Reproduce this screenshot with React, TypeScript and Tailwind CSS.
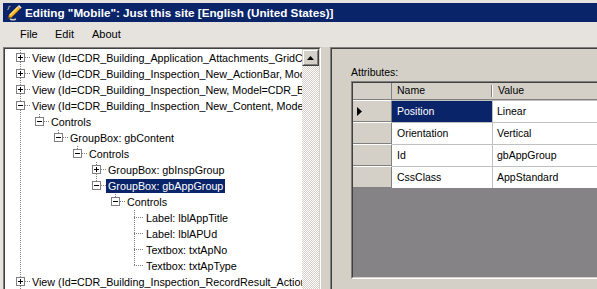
import React from 'react';

type Kind = 'plus' | 'minus' | 'leaf';

type TreeRow = {
  label: string;
  level: number;
  kind: Kind;
  up: boolean;
  down: boolean;
  anc: boolean[];
  selected?: boolean;
};

const under = [true, false, false, false, false, false];

const rows: TreeRow[] = [
  { label: 'View (Id=CDR_Building_Application_Attachments_GridCell, Model=CDR_Building_Application)', level: 0, kind: 'plus', up: true, down: true, anc: [] },
  { label: 'View (Id=CDR_Building_Inspection_New_ActionBar, Model=CDR_Building_Inspection)', level: 0, kind: 'plus', up: true, down: true, anc: [] },
  { label: 'View (Id=CDR_Building_Inspection_New, Model=CDR_Building_Inspection)', level: 0, kind: 'plus', up: true, down: true, anc: [] },
  { label: 'View (Id=CDR_Building_Inspection_New_Content, Model=CDR_Building_Inspection)', level: 0, kind: 'minus', up: true, down: true, anc: [] },
  { label: 'Controls', level: 1, kind: 'minus', up: true, down: false, anc: under.slice(0, 1) },
  { label: 'GroupBox: gbContent', level: 2, kind: 'minus', up: true, down: false, anc: under.slice(0, 2) },
  { label: 'Controls', level: 3, kind: 'minus', up: true, down: false, anc: under.slice(0, 3) },
  { label: 'GroupBox: gbInspGroup', level: 4, kind: 'plus', up: true, down: true, anc: under.slice(0, 4) },
  { label: 'GroupBox: gbAppGroup', level: 4, kind: 'minus', up: true, down: false, anc: under.slice(0, 4), selected: true },
  { label: 'Controls', level: 5, kind: 'minus', up: true, down: false, anc: under.slice(0, 5) },
  { label: 'Label: lblAppTitle', level: 6, kind: 'leaf', up: true, down: true, anc: under.slice(0, 6) },
  { label: 'Label: lblAPUd', level: 6, kind: 'leaf', up: true, down: true, anc: under.slice(0, 6) },
  { label: 'Textbox: txtApNo', level: 6, kind: 'leaf', up: true, down: true, anc: under.slice(0, 6) },
  { label: 'Textbox: txtApType', level: 6, kind: 'leaf', up: true, down: false, anc: under.slice(0, 6) },
  { label: 'View (Id=CDR_Building_Inspection_RecordResult_ActionBar, Model=CDR_Building_Inspection)', level: 0, kind: 'plus', up: true, down: true, anc: [] },
];

const attrs = [
  { name: 'Position', value: 'Linear' },
  { name: 'Orientation', value: 'Vertical' },
  { name: 'Id', value: 'gbAppGroup' },
  { name: 'CssClass', value: 'AppStandard' },
];

// one 19x16 indent cell of the tree: dotted connectors and the +/- box
function Cell({ kind, up, down, line }: { kind?: Kind; up?: boolean; down?: boolean; line?: boolean }) {
  const dot = { stroke: '#808080', strokeDasharray: '1 1', strokeWidth: 1 };
  return (
    <svg width="19" height="16" className="shrink-0" shapeRendering="crispEdges">
      {line && <line x1="9.5" y1="0" x2="9.5" y2="16" {...dot} />}
      {kind === 'leaf' && (
        <>
          {up && <line x1="9.5" y1="0" x2="9.5" y2="8" {...dot} />}
          {down && <line x1="9.5" y1="8" x2="9.5" y2="16" {...dot} />}
          <line x1="9" y1="7.5" x2="19" y2="7.5" {...dot} />
        </>
      )}
      {(kind === 'plus' || kind === 'minus') && (
        <>
          {up && <line x1="9.5" y1="0" x2="9.5" y2="3" {...dot} />}
          {down && <line x1="9.5" y1="12" x2="9.5" y2="16" {...dot} />}
          <line x1="14" y1="7.5" x2="19" y2="7.5" {...dot} />
          <rect x="5.5" y="3.5" width="8" height="8" fill="#fff" stroke="#808080" />
          <line x1="7" y1="7.5" x2="12" y2="7.5" stroke="#000" />
          {kind === 'plus' && <line x1="9.5" y1="5" x2="9.5" y2="10" stroke="#000" />}
        </>
      )}
    </svg>
  );
}

function PencilIcon() {
  return (
    <svg width="17" height="17" viewBox="0 0 17 17" className="shrink-0">
      <path d="M3 3.5 L5.5 2 M2.5 6 L4 4" stroke="#9a9a9a" strokeWidth="1.2" fill="none" />
      <path d="M5 15 Q8 16.5 11 15" stroke="#c8c8c8" strokeWidth="1.5" fill="none" />
      <path d="M3 14.5 L4.2 10.8 L12.8 2.2 L15.3 4.7 L6.7 13.3 Z" fill="#f5b21c" stroke="#a0560c" strokeWidth="0.8" />
      <path d="M4.2 10.8 L12.8 2.2 L13.8 3.2 L5.2 11.8 Z" fill="#ffe37a" />
      <path d="M12.8 2.2 L14 1 L16.5 3.5 L15.3 4.7 Z" fill="#f0f0f0" stroke="#8a8a8a" strokeWidth="0.6" />
      <path d="M3 14.5 L3.6 12.6 L4.9 13.9 Z" fill="#303030" />
    </svg>
  );
}

export default function App() {
  return (
    <div className="flex h-[289px] w-[597px] flex-col overflow-hidden bg-[#e6e3df] pl-[3px] pt-[3px] font-['Liberation_Sans',Arial,sans-serif] text-black">
      {/* title bar */}
      <div className="flex h-[19px] shrink-0 items-center gap-[3px] bg-[#0a246a] pl-[2px] text-[11.7px] font-bold whitespace-nowrap text-white">
        <PencilIcon />
        <span>Editing "Mobile": Just this site [English (United States)]</span>
      </div>

      {/* menu */}
      <div className="flex h-[25px] shrink-0 items-center pl-[17px] text-[11px]">
        <span className="w-[35px]">File</span>
        <span className="w-[37px]">Edit</span>
        <span>About</span>
      </div>

      <div className="flex min-h-0 flex-1 -ml-[3px] pl-[3px]">
        {/* tree */}
        <div className="flex w-[318px] shrink-0 border-t border-l border-t-[#808080] border-l-[#808080] border-r border-r-white">
          <div className="flex min-w-0 flex-1 border-t border-l border-t-[#404040] border-l-[#404040] border-r border-r-[#d4d0c8]">
            <div className="min-w-0 flex-1 overflow-hidden bg-white pt-[1px] text-[10.75px]">
              {rows.map((r, i) => (
                <div key={i} className="flex h-4 items-center pl-[6px] whitespace-nowrap">
                  {r.anc.map((a, j) => (
                    <Cell key={j} line={a} />
                  ))}
                  <Cell kind={r.kind} up={r.up} down={r.down} />
                  <span
                    className={
                      r.selected
                        ? 'flex h-[14px] items-center bg-[#0a246a] px-[2px] text-white'
                        : 'flex h-[14px] items-center px-[2px]'
                    }
                  >
                    {r.label}
                  </span>
                </div>
              ))}
            </div>
            {/* scrollbar */}
            <div className="flex w-[17px] shrink-0 flex-col bg-[repeating-conic-gradient(#ffffff_0%_25%,#d4d0c8_0%_50%)] bg-size-[2px_2px]">
              <div className="flex h-[17px] shrink-0 border border-t-[#d4d0c8] border-l-[#d4d0c8] border-r-[#404040] border-b-[#404040]">
                <div className="flex flex-1 items-center justify-center border border-t-white border-l-white border-r-[#808080] border-b-[#808080] bg-[#d4d0c8]">
                  <svg width="7" height="4" viewBox="0 0 7 4">
                    <path d="M3.5 0 L7 4 L0 4 Z" fill="#000" />
                  </svg>
                </div>
              </div>
            </div>
          </div>
        </div>

        {/* splitter */}
        <div className="w-[9px] shrink-0 bg-[#d4d0c8]" />

        {/* attributes panel */}
        <div className="flex min-w-0 flex-1 flex-col overflow-hidden border-t border-l border-t-[#808080] border-l-[#808080] bg-[#d4d0c8]">
          <div className="flex min-h-0 flex-1 flex-col border-t border-l border-t-[#404040] border-l-[#404040] pl-[19px] pt-[16px]">
            <div className="h-[14px] text-[10.5px] leading-[14px]">Attributes:</div>
            <div className="mt-[2px] flex h-[198px] w-[320px] shrink-0 flex-col border border-t-[#808080] border-l-[#808080] border-r-white border-b-white">
              <div className="flex min-h-0 flex-1 flex-col border border-t-[#404040] border-l-[#404040] border-r-[#d4d0c8] border-b-[#d4d0c8] bg-[#868386] text-[10.5px]">
                {/* header */}
                <div className="flex h-[17px] shrink-0 border-b border-b-[#808080] bg-[#d4d0c8]">
                  <div className="w-[39px] shrink-0 border-r border-r-[#808080]" />
                  <div className="flex w-[101px] shrink-0 items-center justify-between pl-[5px]">
                    <span>Name</span>
                    <span className="h-[12px] w-[2px] border-l border-l-[#808080] border-r border-r-white" />
                  </div>
                  <div className="flex flex-1 items-center pl-[5px]">Value</div>
                </div>
                {attrs.map((a, i) => (
                  <div key={a.name} className="flex h-[22px] shrink-0">
                    <div className="flex w-[39px] shrink-0 items-center border-t border-b border-r border-t-white border-b-[#808080] border-r-[#808080] bg-[#d4d0c8] pl-[4px]">
                      {i === 0 && (
                        <svg width="5" height="9" viewBox="0 0 5 9">
                          <path d="M0 0 L5 4.5 L0 9 Z" fill="#000" />
                        </svg>
                      )}
                    </div>
                    <div className="flex w-[101px] shrink-0 border-t border-r border-t-[#c0c0c0] border-r-[#c0c0c0] bg-white">
                      <div
                        className={
                          i === 0
                            ? 'flex flex-1 items-center bg-[#0a246a] pl-[5px] text-white'
                            : 'flex flex-1 items-center pl-[5px]'
                        }
                      >
                        {a.name}
                      </div>
                    </div>
                    <div className="flex flex-1 items-center border-t border-t-[#c0c0c0] bg-white pl-[4px]">{a.value}</div>
                  </div>
                ))}
              </div>
            </div>
          </div>
        </div>
      </div>
    </div>
  );
}
